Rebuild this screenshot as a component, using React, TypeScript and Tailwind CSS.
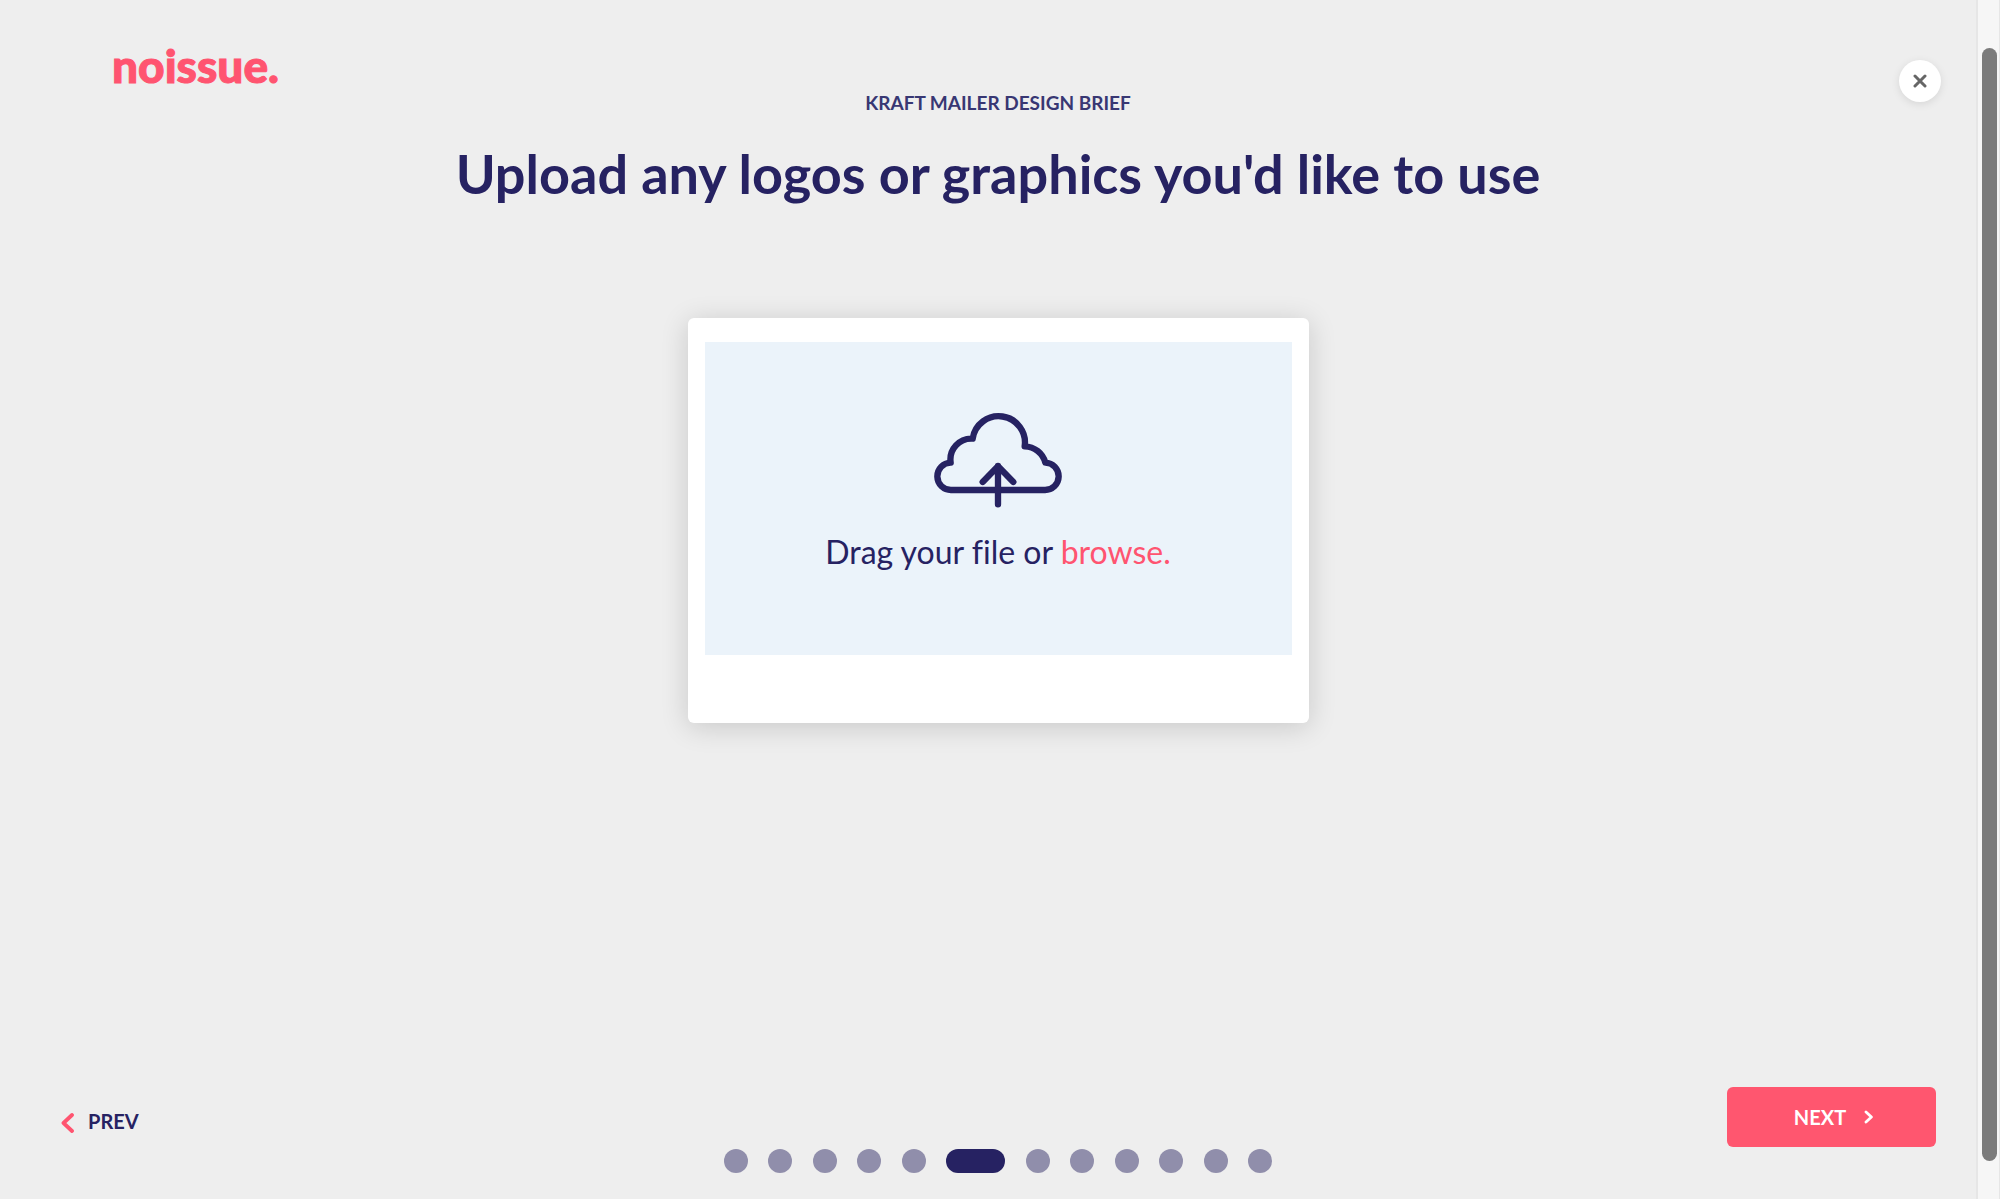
import clsx from 'clsx'
import { useState } from 'react'

const STEP_COUNT = 12

function CloudUploadIcon() {
  return (
    <svg
      viewBox="102 66 384 288"
      className="h-24 w-32"
      fill="none"
      stroke="currentColor"
      strokeWidth="19"
      strokeLinecap="round"
      strokeLinejoin="round"
      aria-hidden="true"
    >
      <path d="M154 300H434A41 41 0 0 0 436 218A66 66 0 0 0 374 169A78 78 0 1 0 218 146A63 63 0 0 0 152 218A41 41 0 0 0 154 300Z" />
      <path d="M294 343V228M248 276L294 229L340 276" />
    </svg>
  )
}

function Header() {
  return (
    <header className="grid grid-cols-[1fr_auto_1fr] items-start">
      <a
        href="/"
        className="mt-[34px] ml-28 justify-self-start text-[46px] leading-[64px] font-black text-[#ff5470] [-webkit-text-stroke:1px_#ff5470]"
      >
        noissue.
      </a>
      <div className="mt-[90px] text-center">
        <p className="text-[19px] leading-[26px] font-bold text-[#383773]">KRAFT MAILER DESIGN BRIEF</p>
        <h1 className="mt-6 text-[54px] leading-[68px] font-bold text-[#262262]">
          Upload any logos or graphics you'd like to use
        </h1>
      </div>
      <button
        type="button"
        aria-label="Close"
        className="mt-[60px] mr-[55px] flex size-[42px] items-center justify-center justify-self-end rounded-full bg-white text-[#666] shadow-[0_2px_8px_rgba(0,0,0,0.1)]"
      >
        <svg viewBox="0 0 14 14" className="size-[14px]" stroke="currentColor" strokeWidth="3" strokeLinecap="round">
          <path d="M2 2L12 12M12 2L2 12" />
        </svg>
      </button>
    </header>
  )
}

function UploadCard() {
  const [fileName, setFileName] = useState('')

  return (
    <section className="mx-auto w-full max-w-[621px] rounded-md bg-white px-[17px] pt-6 pb-[68px] shadow-[0_4px_28px_rgba(0,0,0,0.16)]">
      <label
        htmlFor="artwork"
        className="flex h-[313px] cursor-pointer flex-col items-center bg-[#ebf3fa] pt-[70px] text-[#262262]"
      >
        <CloudUploadIcon />
        <span className="mt-6 text-[32px] leading-10 [font-variant-ligatures:none]">
          {fileName || (
            <>
              Drag your file or <span className="text-[#ff5470]">browse.</span>
            </>
          )}
        </span>
        <input
          id="artwork"
          type="file"
          className="sr-only"
          onChange={e => setFileName(e.target.files?.[0]?.name ?? '')}
        />
      </label>
    </section>
  )
}

export default function App() {
  const [step, setStep] = useState(5)

  return (
    <div className="relative flex min-h-screen flex-col bg-[#eee] pr-1 font-['Lato',sans-serif]">
      <Header />
      <main className="mt-[110px] mb-10">
        <UploadCard />
      </main>

      <footer className="mt-auto grid grid-cols-[1fr_auto_1fr] items-start pb-[26px]">
        <button
          type="button"
          onClick={() => setStep(s => Math.max(0, s - 1))}
          className="mt-[22px] ml-[61px] flex items-center gap-[14px] justify-self-start text-xl leading-6 font-bold text-[#262262]"
        >
          <svg
            viewBox="0 0 13 20"
            className="mt-1 h-5 w-[13px] text-[#ff5470]"
            fill="none"
            stroke="currentColor"
            strokeWidth="3.8"
            strokeLinecap="round"
            strokeLinejoin="round"
          >
            <path d="M11 2L2.5 10L11 18" />
          </svg>
          PREV
        </button>

        <ol className="flex w-[549px] justify-between self-end">
          {Array.from({ length: STEP_COUNT }, (_, i) => (
            <li
              key={i}
              aria-current={i === step ? 'step' : undefined}
              className={clsx('h-6 rounded-full', i === step ? 'w-[59px] bg-[#262262]' : 'w-6 bg-[#908eab]')}
            />
          ))}
        </ol>

        <button
          type="button"
          onClick={() => setStep(s => Math.min(STEP_COUNT - 1, s + 1))}
          className="mr-[60px] mb-[26px] flex h-[60px] w-[209px] items-center justify-center gap-[18px] justify-self-end rounded-md bg-[#ff566f] pl-1 text-xl font-bold text-white"
        >
          NEXT
          <svg
            viewBox="0 0 9 14"
            className="h-[14px] w-[9px]"
            fill="none"
            stroke="currentColor"
            strokeWidth="2.8"
            strokeLinecap="round"
            strokeLinejoin="round"
          >
            <path d="M2 2L7.4 7L2 12" />
          </svg>
        </button>
      </footer>

      {/* Scroll track */}
      <div className="absolute inset-y-0 right-0 w-6 border-r border-l-2 border-[#e6e6e6] bg-[#f6f6f6] pt-12 pr-[2px] pb-[38px] pl-1">
        <div className="h-full rounded-full bg-[#7b7b7b]" />
      </div>
    </div>
  )
}
